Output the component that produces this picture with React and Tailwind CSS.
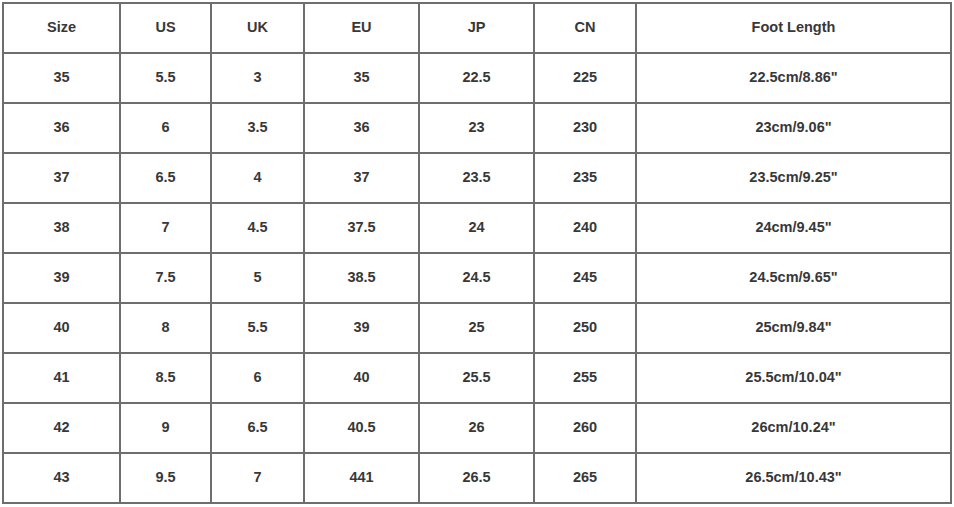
const headers = ['Size', 'US', 'UK', 'EU', 'JP', 'CN', 'Foot Length'];

const rows = [
  ['35', '5.5', '3', '35', '22.5', '225', '22.5cm/8.86"'],
  ['36', '6', '3.5', '36', '23', '230', '23cm/9.06"'],
  ['37', '6.5', '4', '37', '23.5', '235', '23.5cm/9.25"'],
  ['38', '7', '4.5', '37.5', '24', '240', '24cm/9.45"'],
  ['39', '7.5', '5', '38.5', '24.5', '245', '24.5cm/9.65"'],
  ['40', '8', '5.5', '39', '25', '250', '25cm/9.84"'],
  ['41', '8.5', '6', '40', '25.5', '255', '25.5cm/10.04"'],
  ['42', '9', '6.5', '40.5', '26', '260', '26cm/10.24"'],
  ['43', '9.5', '7', '441', '26.5', '265', '26.5cm/10.43"'],
];

// column widths measured off the picture
const widths = ['w-[117px]', 'w-[91px]', 'w-[93px]', 'w-[115px]', 'w-[115px]', 'w-[102px]', 'w-[315px]'];

function Cell({ children, width }) {
  return (
    <td className={`${width} h-[50px] pb-[1px] border-2 border-[#6e6e6e] text-center align-middle`}>
      {children}
    </td>
  );
}

export default function App() {
  return (
    <div className="w-[954px] h-[507px] bg-white pt-[2px] pl-[2px] font-['Liberation_Sans',Arial,sans-serif] text-[14.5px] font-bold text-[#383838]">
      <table className="border-collapse table-fixed w-[950px]">
        <thead>
          <tr>
            {headers.map((h, i) => (
              <Cell key={h} width={widths[i]}>{h}</Cell>
            ))}
          </tr>
        </thead>
        <tbody>
          {rows.map(row => (
            <tr key={row[0]}>
              {row.map((v, i) => (
                <Cell key={i} width={widths[i]}>{v}</Cell>
              ))}
            </tr>
          ))}
        </tbody>
      </table>
    </div>
  );
}
